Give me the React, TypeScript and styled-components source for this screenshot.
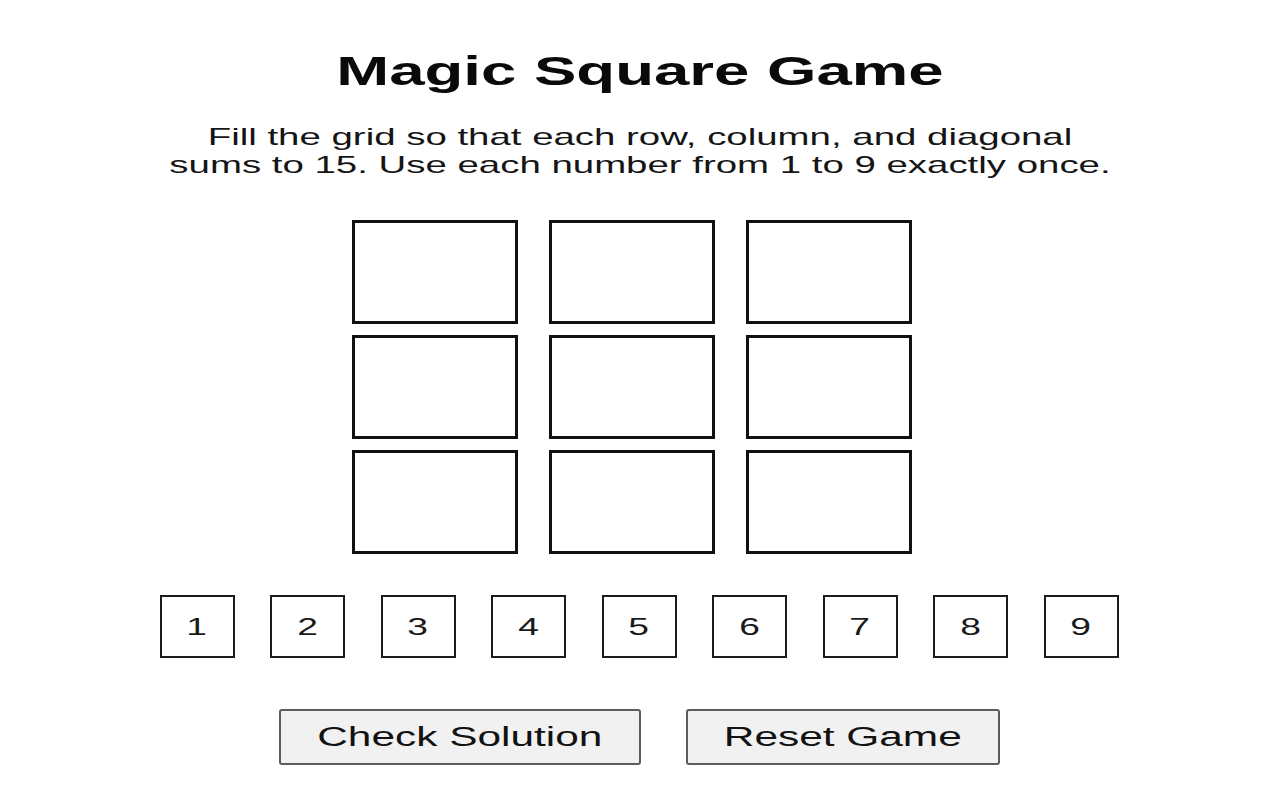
import React, { FC, useState } from "react"
import styled, { createGlobalStyle } from "styled-components"

const GlobalStyle = createGlobalStyle`
  html, body {
    margin: 0;
    padding: 0;
    background: #ffffff;
  }
  body {
    font-family: "Liberation Sans", Arial, sans-serif;
    color: #111111;
  }
`

const Page = styled.div`
  display: flex;
  flex-direction: column;
  align-items: center;
  padding-top: 50px;
  width: 1280px;
  height: 800px;
  box-sizing: border-box;
`

// the lettering in this view is drawn wide, so text is widened on its own
const Wide = styled.span<{ $x: number }>`
  display: inline-block;
  transform: scaleX(${(p) => p.$x});
  transform-origin: center;
`

const Title = styled.h1`
  margin: 0;
  font-size: 41px;
  line-height: 42px;
  font-weight: 700;
  color: #0a0a0a;
`

const Intro = styled.p`
  margin: 31px 0 0;
  max-width: 596px;
  font-size: 24px;
  line-height: 28px;
  text-align: center;
  color: #151515;
`

const Board = styled.div`
  display: grid;
  grid-template-columns: repeat(3, 166px);
  grid-auto-rows: 104px;
  column-gap: 31px;
  row-gap: 11px;
  margin-top: 41px;
  margin-right: 16px;
`

const Cell = styled.div`
  box-sizing: border-box;
  border: 3px solid #111111;
  background: #ffffff;
`

const Tray = styled.div`
  display: flex;
  gap: 35.5px;
  margin-top: 41px;
  margin-right: 2px;
`

const Tile = styled.div`
  box-sizing: border-box;
  width: 75px;
  height: 63px;
  border: 2px solid #1c1c1c;
  display: flex;
  align-items: center;
  justify-content: center;
  font-size: 24px;
  color: #1a1a1a;
  background: #ffffff;
  user-select: none;
`

const Actions = styled.div`
  display: flex;
  gap: 45px;
  margin-top: 51px;
  margin-right: 2px;
`

const ActionButton = styled.button<{ $width: number }>`
  box-sizing: border-box;
  width: ${(p) => p.$width}px;
  height: 56px;
  border: 2px solid #5c5c5c;
  border-radius: 3px;
  background: #f1f1f1;
  font-family: "Liberation Sans", Arial, sans-serif;
  font-size: 27px;
  color: #121212;
  padding: 0;
  cursor: pointer;
`

const NUMBERS = [1, 2, 3, 4, 5, 6, 7, 8, 9]

const App: FC = () => {
  const [cells, setCells] = useState<(number | null)[]>(Array(9).fill(null))

  return (
    <>
      <GlobalStyle />
      <Page>
        <Title>
          <Wide $x={1.55}>Magic Square Game</Wide>
        </Title>
        <Intro>
          <Wide $x={1.6}>
            Fill the grid so that each row, column, and diagonal sums to 15.
            Use each number from 1 to 9 exactly once.
          </Wide>
        </Intro>
        <Board>
          {cells.map((value, i) => (
            <Cell key={i}>{value ?? ""}</Cell>
          ))}
        </Board>
        <Tray>
          {NUMBERS.map((n) => (
            <Tile key={n}>
              <Wide $x={1.55}>{n}</Wide>
            </Tile>
          ))}
        </Tray>
        <Actions>
          <ActionButton $width={362}>
            <Wide $x={1.57}>Check Solution</Wide>
          </ActionButton>
          <ActionButton $width={314} onClick={() => setCells(Array(9).fill(null))}>
            <Wide $x={1.57}>Reset Game</Wide>
          </ActionButton>
        </Actions>
      </Page>
    </>
  )
}

export default App
